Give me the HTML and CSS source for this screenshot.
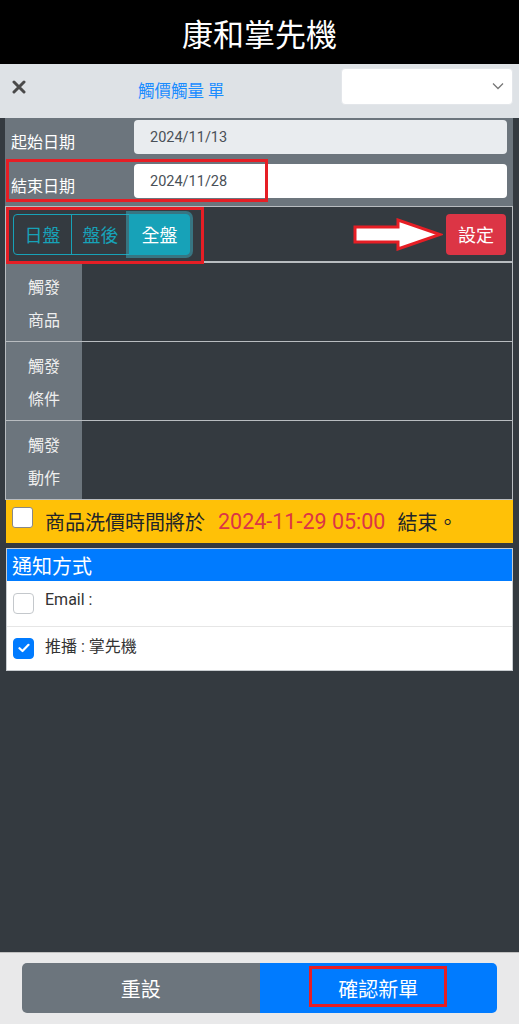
FILE: index.html
```html
<!DOCTYPE html>
<html lang="zh-Hant">
<head>
<meta charset="utf-8">
<title>康和掌先機</title>
<link rel="stylesheet" href="styles.css">
</head>
<body>
<div class="page">
  <header class="app-header">康和掌先機</header>
  <div class="toolbar">
    <span class="close-btn">
      <svg width="14" height="14" viewBox="0 0 14 14"><path d="M2 2 L12 12 M12 2 L2 12" stroke="#4a4a4a" stroke-width="3" stroke-linecap="round"/></svg>
    </span>
    <span class="toolbar-title">觸價觸量 單</span>
    <div class="select-box">
      <svg class="chev" width="12" height="8" viewBox="0 0 12 8"><path d="M1 1.5 L6 6.5 L11 1.5" fill="none" stroke="#777" stroke-width="1.3"/></svg>
    </div>
  </div>

  <main class="content">
    <section class="date-form">
      <div class="date-row">
        <label class="date-label">起始日期</label>
        <div class="date-input readonly">2024/11/13</div>
      </div>
      <div class="date-row">
        <label class="date-label">結束日期</label>
        <div class="date-input">2024/11/28</div>
        <span class="mark mark-end"></span>
      </div>
    </section>

    <section class="session-bar">
      <div class="btn-group">
        <span class="seg">日盤</span>
        <span class="seg">盤後</span>
        <span class="seg active">全盤</span>
      </div>
      <svg class="arrow" width="90" height="33" viewBox="0 0 90 33">
        <polygon points="2,9 45,9 45,2 87,16.5 45,31 45,24 2,24" fill="#fff" stroke="#e61e25" stroke-width="3" stroke-linejoin="miter"/>
      </svg>
      <span class="set-btn">設定</span>
      <span class="mark mark-session"></span>
    </section>

    <section class="trigger-table">
      <div class="trow"><div class="tlabel">觸發<br>商品</div><div class="tcell"></div></div>
      <div class="trow"><div class="tlabel">觸發<br>條件</div><div class="tcell"></div></div>
      <div class="trow"><div class="tlabel">觸發<br>動作</div><div class="tcell"></div></div>
    </section>

    <section class="notice-bar">
      <span class="cbox"></span>
      <span class="notice-text">商品洗價時間將於</span>
      <span class="notice-time">2024-11-29 05:00</span>
      <span class="notice-text">結束。</span>
    </section>

    <section class="notify-card">
      <div class="notify-head">通知方式</div>
      <div class="notify-row">
        <span class="cbox2"></span>
        <span class="notify-label">Email :</span>
      </div>
      <div class="notify-row">
        <span class="cbox2 checked">
          <svg width="12" height="10" viewBox="0 0 12 10"><path d="M1.5 5.2 L4.5 8 L10.5 1.8" fill="none" stroke="#fff" stroke-width="2.2" stroke-linecap="round" stroke-linejoin="round"/></svg>
        </span>
        <span class="notify-label">推播 : 掌先機</span>
      </div>
    </section>
  </main>

  <footer class="app-footer">
    <div class="footer-group">
      <span class="fbtn reset">重設</span>
      <span class="fbtn confirm">確認新單<span class="mark mark-confirm"></span></span>
    </div>
  </footer>
</div>
</body>
</html>
```

FILE: styles.css
```css
* { box-sizing: border-box; }
html, body { margin: 0; padding: 0; }
body {
  background: #343a40;
  font-family: Roboto, "Noto Sans CJK TC", sans-serif;
  color: #fff;
}
.page {
  width: 519px;
  height: 1024px;
  display: flex;
  flex-direction: column;
}
.app-header {
  height: 64px;
  background: #000;
  color: #fff;
  font-size: 31px;
  display: flex;
  align-items: center;
  justify-content: center;
  font-family: "Noto Sans CJK TC", sans-serif;
  padding-top: 1px;
}
.toolbar {
  height: 54px;
  background: #dee2e6;
  display: flex;
  align-items: center;
  padding: 0 6px 0 12px;
  position: relative;
}
.close-btn { width: 14px; height: 14px; display: flex; margin-top: -8px; }
.toolbar-title {
  margin-left: 112px;
  font-size: 16.5px;
  color: #1a8cff;
  font-family: "Noto Sans CJK TC", sans-serif;
  margin-top: -3px;
}
.select-box {
  margin-left: auto;
  width: 172px;
  height: 37px;
  background: #fff;
  border-radius: 4px;
  border: 1px solid #e3e6ea;
  display: flex;
  align-items: center;
  justify-content: flex-end;
  padding-right: 8px;
  margin-top: -10px;
}
.content {
  flex: 1;
  padding: 0 6px 0 5px;
  display: flex;
  flex-direction: column;
}
.date-form {
  background: #6c757d;
  padding: 2px 6px 8px 6px;
  display: flex;
  flex-direction: column;
  gap: 10px;
}
.date-row {
  display: flex;
  align-items: flex-end;
  height: 34px;
  position: relative;
}
.date-label {
  width: 123px;
  font-size: 16px;
  color: #fff;
  font-family: "Noto Sans CJK TC", sans-serif;
  line-height: 20px;
  padding-bottom: 3px;
}
.date-input {
  flex: 1;
  height: 34px;
  background: #fff;
  border-radius: 4px;
  color: #495057;
  font-size: 14.5px;
  display: flex;
  align-items: center;
  padding-left: 16px;
}
.date-input.readonly { background: #e9ecef; }
.mark {
  position: absolute;
  border: 3px solid #e61e25;
  pointer-events: none;
}
.mark-end { left: -5px; top: -5px; width: 262px; height: 43px; }
.session-bar {
  height: 57px;
  border: 1px solid #b8bcc0;
  border-bottom-width: 2px;
  display: flex;
  align-items: center;
  padding: 0 6px 0 7px;
  position: relative;
}
.btn-group { display: flex; height: 41px; }
.seg {
  width: 59px;
  display: flex;
  align-items: center;
  justify-content: center;
  border: 1px solid #17a2b8;
  color: #17a2b8;
  font-size: 18px;
  font-family: "Noto Sans CJK TC", sans-serif;
}
.seg:first-child { border-radius: 4px 0 0 4px; }
.seg + .seg { margin-left: -1px; }
.seg.active {
  background: #17a2b8;
  color: #fff;
  border-radius: 0 4px 4px 0;
  width: 61px;
  box-shadow: 0 0 0 3px rgba(58,176,195,0.5);
  position: relative;
}
.arrow { margin-left: auto; margin-right: 3px; }
.set-btn {
  width: 60px;
  height: 41px;
  background: #dc3545;
  border-radius: 4px;
  display: flex;
  align-items: center;
  justify-content: center;
  font-size: 18px;
  color: #fff;
  font-family: "Noto Sans CJK TC", sans-serif;
}
.mark-session { left: 0; top: 0; width: 198px; height: 57px; }
.trigger-table {
  display: flex;
  flex-direction: column;
}
.trow {
  height: 79px;
  display: flex;
  border: 1px solid #b8bcc0;
  border-top: 0;
}
.tlabel {
  width: 76px;
  background: #6c757d;
  color: #eee;
  font-size: 16px;
  line-height: 33px;
  display: flex;
  align-items: center;
  justify-content: center;
  text-align: center;
  font-family: "Noto Sans CJK TC", sans-serif;
  padding-top: 2px;
}
.tcell { flex: 1; background: #343a40; }
.notice-bar {
  height: 43px;
  background: #ffc107;
  display: flex;
  align-items: center;
  padding-left: 6px;
  margin-left: 1px;
  font-family: "Noto Sans CJK TC", sans-serif;
}
.cbox {
  width: 21px;
  height: 21px;
  background: #fff;
  border: 1px solid #888;
  border-radius: 3px;
  margin-right: 12px;
  margin-top: -9px;
}
.notice-text { font-size: 20px; color: #212529; margin-right: 13px; }
.notice-time { font-size: 21.5px; color: #dc3545; margin-right: 12px; font-family: Roboto, sans-serif; }
.notify-card {
  margin-top: 5px;
  margin-left: 1px;
  background: #fff;
  border: 1px solid #c8ccd0;
}
.notify-head {
  height: 32px;
  background: #007bff;
  color: #fff;
  font-size: 20px;
  padding-left: 5px;
  display: flex;
  align-items: center;
  font-family: "Noto Sans CJK TC", sans-serif;
}
.notify-row {
  height: 45px;
  display: flex;
  align-items: center;
  padding-left: 6px;
}
.notify-row + .notify-row { border-top: 1px solid #e6e6e6; height: 44px; }
.cbox2 {
  width: 21px;
  height: 21px;
  border: 1px solid #c4c8cc;
  border-radius: 4px;
  margin-right: 11px;
  margin-top: -1px;
  display: flex;
  align-items: center;
  justify-content: center;
}
.cbox2.checked { background: #007bff; border-color: #007bff; }
.notify-label { font-size: 16px; color: #333; font-family: Roboto, "Noto Sans CJK TC", sans-serif; margin-top: -8px; }
.app-footer {
  height: 72px;
  background: #e9e9ea;
  border-top: 1px solid #c0c0c0;
  padding: 10px 22px 10px 22px;
}
.footer-group {
  display: flex;
  height: 50px;
  border-radius: 5px;
  overflow: hidden;
}
.fbtn {
  flex: 1;
  display: flex;
  align-items: center;
  justify-content: center;
  color: #fff;
  font-size: 20px;
  font-family: "Noto Sans CJK TC", sans-serif;
  position: relative;
}
.fbtn.reset { background: #6c757d; }
.fbtn.confirm { background: #007bff; }
.mark-confirm { left: 49px; top: 3px; width: 138px; height: 41px; }
```
